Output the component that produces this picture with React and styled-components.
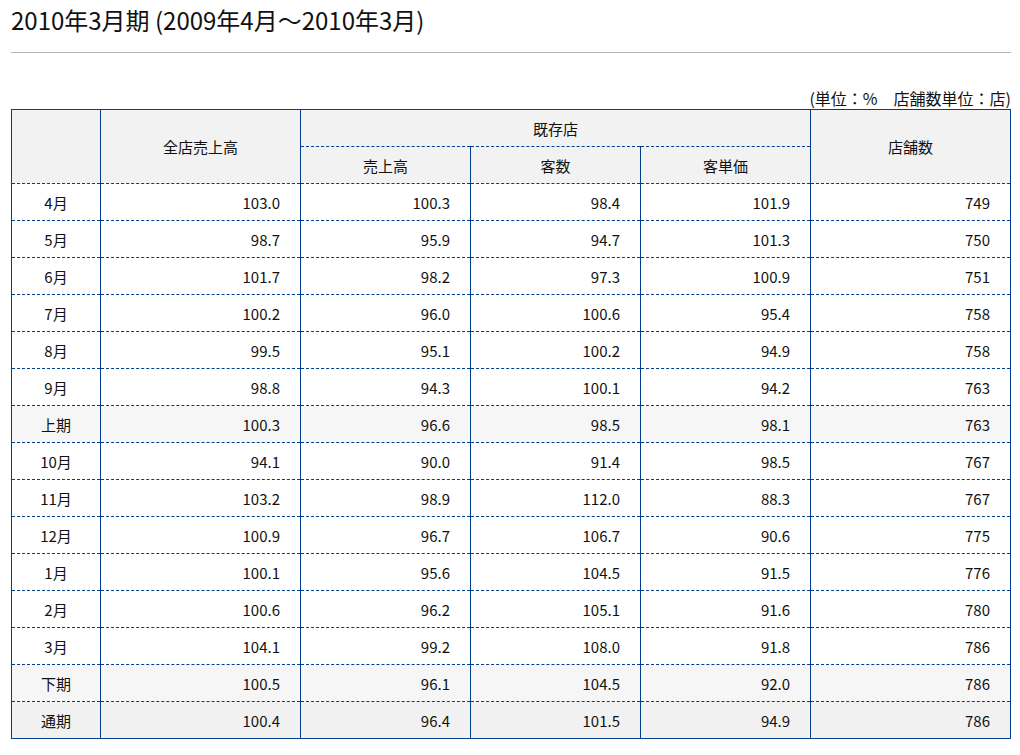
import React from "react";
import styled, { createGlobalStyle } from "styled-components";

const rows = [
  ["4月", "103.0", "100.3", "98.4", "101.9", "749"],
  ["5月", "98.7", "95.9", "94.7", "101.3", "750"],
  ["6月", "101.7", "98.2", "97.3", "100.9", "751"],
  ["7月", "100.2", "96.0", "100.6", "95.4", "758"],
  ["8月", "99.5", "95.1", "100.2", "94.9", "758"],
  ["9月", "98.8", "94.3", "100.1", "94.2", "763"],
  ["上期", "100.3", "96.6", "98.5", "98.1", "763", "half"],
  ["10月", "94.1", "90.0", "91.4", "98.5", "767"],
  ["11月", "103.2", "98.9", "112.0", "88.3", "767"],
  ["12月", "100.9", "96.7", "106.7", "90.6", "775"],
  ["1月", "100.1", "95.6", "104.5", "91.5", "776"],
  ["2月", "100.6", "96.2", "105.1", "91.6", "780"],
  ["3月", "104.1", "99.2", "108.0", "91.8", "786"],
  ["下期", "100.5", "96.1", "104.5", "92.0", "786", "half"],
  ["通期", "100.4", "96.4", "101.5", "94.9", "786", "total"],
];

export default function App() {
  return (
    <Page>
      <GlobalStyle />
      <Title>2010年3月期 (2009年4月～2010年3月)</Title>
      <Rule />
      <Unit>(単位：%　店舗数単位：店)</Unit>
      <Table>
        <colgroup>
          <col style={{ width: 89 }} />
          <col style={{ width: 200 }} />
          <col style={{ width: 170 }} />
          <col style={{ width: 170 }} />
          <col style={{ width: 170 }} />
          <col style={{ width: 200 }} />
        </colgroup>
        <thead>
          <tr>
            <Th rowSpan={2}></Th>
            <Th rowSpan={2}>全店売上高</Th>
            <Th colSpan={3}>既存店</Th>
            <Th rowSpan={2}>店舗数</Th>
          </tr>
          <tr>
            <Th>売上高</Th>
            <Th>客数</Th>
            <Th>客単価</Th>
          </tr>
        </thead>
        <tbody>
          {rows.map(([label, ...rest]) => {
            const kind = rest.length > 5 ? rest.pop() : "month";
            return (
              <Tr key={label} $kind={kind}>
                <Label>{label}</Label>
                {rest.map((v, i) => (
                  <Num key={i}>{v}</Num>
                ))}
              </Tr>
            );
          })}
        </tbody>
      </Table>
    </Page>
  );
}

const GlobalStyle = createGlobalStyle`
  body {
    margin: 0;
    background: #fff;
    color: #111;
    font-family: "Noto Sans CJK JP", "Noto Sans", sans-serif;
  }
`;

const Page = styled.div`
  width: 1000px;
  padding: 0 0 0 11px;
`;

const Title = styled.h1`
  margin: 0;
  padding-top: 4px;
  height: 35px;
  font-size: 24px;
  font-weight: 400;
  line-height: 32px;
`;

const Rule = styled.hr`
  margin: 13px 0 0;
  border: 0;
  border-top: 1px solid #b4b4b4;
`;

const Unit = styled.p`
  margin: 34px 0 0;
  text-align: right;
  font-size: 16px;
  line-height: 22px;
`;

const Table = styled.table`
  width: 1000px;
  border-collapse: collapse;
  table-layout: fixed;
  border: 1px solid #003f8e;
  font-size: 15px;
`;

const Th = styled.th`
  height: 36px;
  padding: 0;
  font-weight: 400;
  background: #f2f2f2;
  text-align: center;
  border-left: 1px solid #003f8e;
  border-right: 1px solid #003f8e;
  border-top: 1px dashed #003f8e;
  border-bottom: 1px dashed #003f8e;
`;

const Tr = styled.tr`
  background: ${(p) =>
    p.$kind === "half" ? "#f6f6f6" : p.$kind === "total" ? "#f1f1f1" : "#fff"};
`;

const Cell = styled.td`
  height: 36px;
  padding: 0;
  border-left: 1px solid #003f8e;
  border-right: 1px solid #003f8e;
  border-top: 1px dashed #003f8e;
  border-bottom: 1px dashed #003f8e;
`;

const Label = styled(Cell)`
  text-align: center;
`;

const Num = styled(Cell)`
  text-align: right;
  padding-right: 20px;
`;
